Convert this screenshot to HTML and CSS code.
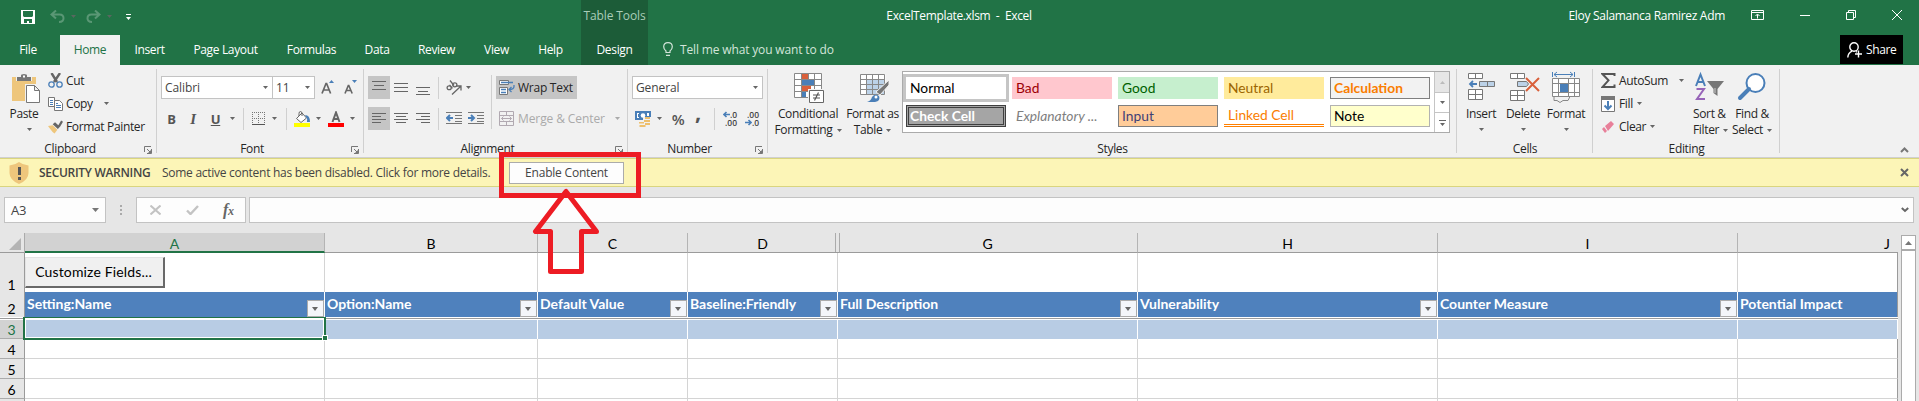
FILE: index.html
```html
<!DOCTYPE html>
<html lang="en">
<head>
<meta charset="utf-8">
<title>ExcelTemplate.xlsm - Excel</title>
<link rel="stylesheet" href="styles.css">
</head>
<body>
<svg class="sprite" width="0" height="0">
  <symbol id="dd" viewBox="0 0 5 3"><path d="M0 0h5L2.500 3z" fill="#666"/></symbol>
  <symbol id="launch" viewBox="0 0 8 8"><path d="M.5 6V.5H7M7.500 3v4.500H3M3 3l3.500 3.500" fill="none" stroke="#777"/><path d="M7 4v3H4z" fill="#777"/></symbol>
</svg>
<div class="app">
  <header class="top">
    <div class="titlebar">
      <div class="qat">
        <svg width="14" height="14" viewBox="0 0 14 14"><path d="M0 0h14v14H0z" fill="#fff"/><path d="M2 1h10v5l-1 1H3L2 6zM3 9h8v4H8v-2H6v2H3z" fill="#217346"/></svg>
        <svg class="undo" width="15" height="13" viewBox="0 0 15 13"><path d="M6 .5L1.500 4.500 6 8.500M2 4.500h7.500q4 0 4 3.700t-4.500 3.800" fill="none" stroke="#5a9775" stroke-width="2"/></svg>
        <svg class="qd" width="5" height="3"><use href="#dd"/></svg>
        <svg class="redo" width="15" height="13" viewBox="0 0 15 13"><path d="M9 .5l4.500 4L9 8.500M13 4.500H5.500q-4 0-4 3.700T6 12" fill="none" stroke="#5a9775" stroke-width="2"/></svg>
        <svg class="qd" width="5" height="3"><use href="#dd"/></svg>
        <svg class="qc" width="5" height="6"><path d="M0 0h5v1H0zM0 3h5L2.500 6z" fill="#fff"/></svg>
      </div>
      <div class="ctx-title">Table Tools</div>
      <div class="doc-title">ExcelTemplate.xlsm&nbsp; -&nbsp; Excel</div>
      <div class="user">Eloy Salamanca Ramirez Adm</div>
      <div class="win">
        <svg width="13" height="10" viewBox="0 0 13 10"><path d="M.5.500h12v9H.5zM.5 2.500h12M6.500 8.500v-4M4.500 6l2-2 2 2" fill="none" stroke="#fff"/></svg>
        <svg width="10" height="10"><path d="M0 5.500h10" stroke="#fff"/></svg>
        <svg width="10" height="10"><path d="M.5 2.500h7v7h-7zM2.500 2.500v-2h7v7h-2" fill="none" stroke="#fff"/></svg>
        <svg width="10" height="10"><path d="M0 0l10 10M10 0L0 10" stroke="#fff"/></svg>
      </div>
    </div>
    <nav class="tabs">
      <a class="tab">File</a><a class="tab on">Home</a><a class="tab">Insert</a><a class="tab">Page Layout</a><a class="tab">Formulas</a><a class="tab">Data</a><a class="tab">Review</a><a class="tab">View</a><a class="tab help">Help</a><a class="tab ctx">Design</a>
      <div class="tell"><svg width="10" height="14" viewBox="0 0 10 14"><path d="M3 10.500V9Q.7 7.200.7 4.700.7.700 5 .7t4.300 4Q9.300 7.200 7 9v1.500zM3 13.300h4" fill="none" stroke="#d3e5da" stroke-width="1.200"/></svg><span>Tell me what you want to do</span></div>
      <div class="share"><svg width="15" height="16" viewBox="0 0 15 16"><circle cx="7" cy="5" r="4.200" fill="none" stroke="#fff" stroke-width="1.400"/><path d="M.8 15.500Q1 11 5 9.200M9 9.500l1 .6M11.500 8.500v7M8 12h7" fill="none" stroke="#fff" stroke-width="1.400"/></svg><span>Share</span></div>
    </nav>
  </header>

  <section class="ribbon">
    <div class="group clipboard">
      <div class="body">
        <div class="big paste">
          <svg width="30" height="31" viewBox="0 0 30 31"><path d="M1 4h24v24H1z" fill="#eec67c"/><path d="M5 2h16v6H5z" fill="#f1f1f1"/><path d="M6 4h4V2.500Q10 1 13 1t3 1.500V4h4v4H6z" fill="#777"/><path d="M12 2.500h2v2h-2z" fill="#fff"/><path d="M14 11h16v20H14z" fill="#f1f1f1"/><path d="M15.500 12.500h8l5 5v12h-13zM23.500 12.500v5h5" fill="#fff" stroke="#777"/></svg>
          <span>Paste</span><svg class="dd" width="5" height="3"><use href="#dd"/></svg>
        </div>
        <div class="list">
          <div><svg width="15" height="15" viewBox="0 0 15 15"><path d="M3.500 0L9 9M12 0L6 9" stroke="#666" stroke-width="2.400"/><circle cx="3.500" cy="11.500" r="2.700" fill="none" stroke="#4a7fb8" stroke-width="1.300"/><circle cx="11.500" cy="11.500" r="2.700" fill="none" stroke="#4a7fb8" stroke-width="1.300"/></svg><span>Cut</span></div>
          <div><svg width="15" height="14" viewBox="0 0 15 14"><path d="M.5.500h6v9h-6z" fill="#fff" stroke="#777"/><path d="M6.500 3.500h5l3 3v7h-8z" fill="#fff" stroke="#777"/><path d="M2 3.500h3M2 5.500h3M2 7.500h3M8 8.500h5M8 10.500h5M8 6.500h2" stroke="#4a7fb8"/></svg><span>Copy</span><svg class="dd" width="5" height="3"><use href="#dd"/></svg></div>
          <div><svg width="15" height="14" viewBox="0 0 16 14"><path d="M0 6l5-1 5 5-3 4q-2-1-4-4z" fill="#eec67c"/><path d="M5 4l2.500-2L11 5l3-5 2 1.500-3 5L10.500 9z" fill="#666"/></svg><span>Format Painter</span></div>
        </div>
      </div>
      <div class="label">Clipboard<svg width="8" height="8"><use href="#launch"/></svg></div>
    </div>

    <div class="group font">
      <div class="body rows">
        <div class="row r1">
          <div class="combo"><span>Calibri</span><svg class="dd" width="5" height="3"><use href="#dd"/></svg></div>
          <div class="combo"><span>11</span><svg class="dd" width="5" height="3"><use href="#dd"/></svg></div>
          <svg width="13" height="14" viewBox="0 0 13 14"><path d="M1 13.500L5 3.500h.6l4 10M2.600 10h5.600" fill="none" stroke="#666" stroke-width="1.700"/><path d="M8 3h5l-2.500-3z" fill="#4a7fb8"/></svg>
          <svg width="13" height="14" viewBox="0 0 13 14"><path d="M1 13.500l3.300-8h.5l3.400 8M2.300 10.500h4.600" fill="none" stroke="#666" stroke-width="1.600"/><path d="M8 0h5l-2.500 3z" fill="#4a7fb8"/></svg>
        </div>
        <div class="row r2">
          <b class="fb">B</b><i class="fi">I</i><u class="fu">U</u><svg class="dd" width="5" height="3"><use href="#dd"/></svg><s></s>
          <svg width="13" height="13" viewBox="0 0 13 13"><path d="M0 .5h13M.5 0v13M12.500 0v13M6.500 0v13M0 6.500h13" fill="none" stroke="#777" stroke-dasharray="1 1"/><path d="M0 12.500h13" stroke="#555"/></svg>
          <svg class="dd" width="5" height="3"><use href="#dd"/></svg><s></s>
          <svg width="16" height="16" viewBox="0 0 16 16"><path d="M2.500 7.500L8 2l4.500 5L7 11.500z" fill="#fff" stroke="#666"/><path d="M5 5V2.500Q5 .5 6.500.500T8 2.500V5" fill="none" stroke="#666"/><path d="M11 4q5 0 5 7h-3q1-3-1-5z" fill="#4a7fb8"/><path d="M0 12h16v4H0z" fill="#ff0"/></svg>
          <svg class="dd" width="5" height="3"><use href="#dd"/></svg>
          <svg width="16" height="16" viewBox="0 0 16 16"><path d="M4.500 11L8 1.500 11.500 11M5.500 8h5" fill="none" stroke="#666" stroke-width="2"/><path d="M0 12h16v4H0z" fill="red"/></svg>
          <svg class="dd" width="5" height="3"><use href="#dd"/></svg>
        </div>
      </div>
      <div class="label">Font<svg width="8" height="8"><use href="#launch"/></svg></div>
    </div>

    <div class="group align">
      <div class="body cols">
        <div class="al">
          <div class="row">
            <div class="sel"><svg width="14" height="15"><path d="M0 1.500h14M2 5.500h10M0 9.500h14" stroke="#666"/></svg></div>
            <svg width="14" height="15"><path d="M0 3.500h14M0 7.500h14M0 11.500h14" stroke="#666"/></svg>
            <svg width="14" height="15"><path d="M0 7.500h14M2 11.500h10M0 14.500h14" stroke="#666"/></svg>
            <s></s>
            <svg width="16" height="15" viewBox="0 0 16 15"><g fill="none" stroke="#666" stroke-width="1.300"><ellipse cx="3.200" cy="7.800" rx="2.100" ry="1.900"/><path d="M3.500 4.800l3 3.500"/><ellipse cx="8.800" cy="4.800" rx="2.100" ry="2"/><path d="M4 .5l4 5M6 14.500l8.500-8M10.500 6h4.500v4.500"/></g></svg>
            <svg class="dd" width="5" height="3"><use href="#dd"/></svg>
          </div>
          <div class="row">
            <div class="sel"><svg width="14" height="15"><path d="M0 2.500h14M0 5.500h9M0 8.500h14M0 11.500h9" stroke="#666"/></svg></div>
            <svg width="14" height="15"><path d="M0 2.500h14M2 5.500h10M0 8.500h14M2 11.500h10" stroke="#666"/></svg>
            <svg width="14" height="15"><path d="M0 2.500h14M5 5.500h9M0 8.500h14M5 11.500h9" stroke="#666"/></svg>
            <s></s>
            <svg width="16" height="15"><path d="M0 1.500h16M9 4.500h7M9 7.500h7M9 10.500h7M0 12.500h16" stroke="#777"/><path d="M1 7h6M4 4L1 7l3 3" stroke="#4a7fb8" stroke-width="2" fill="none"/></svg>
            <svg width="16" height="15"><path d="M0 1.500h16M9 4.500h7M9 7.500h7M9 10.500h7M0 12.500h16" stroke="#777"/><path d="M0 7h6M3 4l3 3-3 3" stroke="#4a7fb8" stroke-width="2" fill="none"/></svg>
          </div>
        </div>
        <s class="tall"></s>
        <div class="wr">
          <div class="wrap sel"><svg width="16" height="16" viewBox="0 0 16 16"><path d="M.5.500h9v4h-9zM.5 7.500h8v7h-8z" fill="#fff" stroke="#777"/><path d="M2 2.500h12M2 9.500h5M2 12.500h5M15 5v1.500Q15 9.500 10 9.500M12.500 7L10 9.500l2.500 2.500" fill="none" stroke="#4a7fb8" stroke-width="1.300"/></svg><span>Wrap Text</span></div>
          <div class="wrap off"><svg width="15" height="15" viewBox="0 0 15 15"><path d="M.5.500h14v14H.5zM.5 4.500h14M.5 10.500h14M7.500.500v4M7.500 10.500v4M2.500 7.500h10M4.500 5.500l-2 2 2 2M10.500 5.500l2 2-2 2" fill="none" stroke="#b1a9b1"/></svg><span>Merge &amp; Center</span><svg class="dd" width="5" height="3"><use href="#dd"/></svg></div>
        </div>
      </div>
      <div class="label">Alignment<svg width="8" height="8"><use href="#launch"/></svg></div>
    </div>

    <div class="group number">
      <div class="body rows">
        <div class="row"><div class="combo"><span>General</span><svg class="dd" width="5" height="3"><use href="#dd"/></svg></div></div>
        <div class="row r2">
          <svg width="16" height="16" viewBox="0 0 16 16"><path d="M0 0h16v9H0z" fill="#4a7fb8"/><path d="M2 2h2v1H3v3h1v1H2zM12 2h2v3h-2z" fill="#fff"/><circle cx="8" cy="4.500" r="2.300" fill="#fff"/><path d="M8 6h8v8h-4v2H3v-5h5z" fill="#f1f1f1"/><path d="M10 6h5v2h-5zM9 9h6v2H9zM10 12h5v2h-5zM4 11h5v1.500H4zM4.500 14h6v2h-6z" fill="#eebf6d"/></svg>
          <svg class="dd" width="5" height="3"><use href="#dd"/></svg>
          <b class="pct">%</b><b class="comma">,</b><s></s>
          <div class="dec"><span><svg width="7" height="7"><path d="M1 3.500h6M3.500 1L1 3.500 3.500 6" fill="none" stroke="#4a7fb8" stroke-width="1.600"/></svg>.0</span><span>.00</span></div>
          <div class="dec"><span>.00</span><span><svg width="7" height="7"><path d="M0 3.500h6M3.500 1L6 3.500 3.500 6" fill="none" stroke="#4a7fb8" stroke-width="1.600"/></svg>.0</span></div>
        </div>
      </div>
      <div class="label">Number<svg width="8" height="8"><use href="#launch"/></svg></div>
    </div>

    <div class="group styles">
      <div class="body">
        <div class="big cf">
          <svg width="30" height="31" viewBox="0 0 30 31"><path d="M.5.500h27v24H.5z" fill="#fff"/><path d="M8 1h6v5H8zM8 13h9v5H8z" fill="#d9603b"/><path d="M8 7h12v5H8zM8 19h4v6H8z" fill="#4a7fb8"/><path d="M.5.500h27v24H.5zM.5 6.500h27M.5 12.500h27M.5 18.500h27M7.500.500v24M14.500.500v6M20.500.500v24" fill="none" stroke="#888"/><path d="M14 16h16v15H14z" fill="#f1f1f1"/><path d="M15.500 17.500h14v12h-14z" fill="#fff" stroke="#666"/><path d="M19 22h7M19 25h7M24.500 19.500l-4 8" stroke="#555" stroke-width="1.200"/></svg>
          <span>Conditional</span><span>Formatting <svg class="dd" width="5" height="3"><use href="#dd"/></svg></span>
        </div>
        <div class="big ft">
          <svg width="30" height="29" viewBox="0 0 30 29"><path d="M.5.500h25v20H.5z" fill="#fff"/><path d="M7 6h18v14H7z" fill="#bcd2e8"/><path d="M.5.500h24v20H.5zM.5 5.500h24M.5 10.500h24M.5 15.500h24M6.500.500v20M12.500.500v20M18.500.500v20" fill="none" stroke="#888"/><path d="M29 6v5L20 21l-4-3z" fill="#777" stroke="#f1f1f1"/><path d="M7 28q4-1 5-5 3-4 7-1 2 5-4 6z" fill="#4a7fb8"/><circle cx="16" cy="23" r="1.500" fill="#fff"/></svg>
          <span>Format as</span><span>Table <svg class="dd" width="5" height="3"><use href="#dd"/></svg></span>
        </div>
        <div class="gallery">
          <div class="swatches">
            <div class="sw normal">Normal</div><div class="sw bad">Bad</div><div class="sw good">Good</div><div class="sw neutral">Neutral</div><div class="sw calc">Calculation</div>
            <div class="sw check">Check Cell</div><div class="sw expl">Explanatory ...</div><div class="sw input">Input</div><div class="sw linked">Linked Cell</div><div class="sw note">Note</div>
          </div>
          <div class="gs">
            <div class="dim"><svg width="5" height="3"><path d="M0 3h5L2.500 0z" fill="#bbb"/></svg></div>
            <div><svg width="5" height="3"><use href="#dd"/></svg></div>
            <div><svg width="7" height="6"><path d="M0 0h7v1H0zM1 3h5L3.500 6z" fill="#666"/></svg></div>
          </div>
        </div>
      </div>
      <div class="label plain">Styles</div>
    </div>

    <div class="group cells">
      <div class="body">
        <div class="big b1">
          <svg width="27" height="31" viewBox="0 0 27 31"><path d="M.5.500h14v5H.5zM7.500.500v5M.5 16.500h14v10H.5zM7.500 16.500v10M.5 21.500h14" fill="#fff" stroke="#777"/><path d="M11.500 8.500h15v5h-15zM19.500 8.500v5" fill="#bcd2e8" stroke="#777"/><path d="M2 11h7M5 8l-3 3 3 3" fill="none" stroke="#4a7fb8" stroke-width="1.800"/></svg>
          <span>Insert</span><svg class="dd" width="5" height="3"><use href="#dd"/></svg>
        </div>
        <div class="big b2">
          <svg width="30" height="31" viewBox="0 0 30 31"><path d="M.5.500h14v5H.5zM7.500.500v5M.5 17.500h14v10H.5zM7.500 17.500v10M.5 22.500h14" fill="#fff" stroke="#777"/><path d="M7.500 8.500h9l2 2.500-2 2.500h-9z" fill="#bcd2e8" stroke="#777"/><path d="M16 5l13 13M29 5L16 18" stroke="#d9603b" stroke-width="2"/></svg>
          <span>Delete</span><svg class="dd" width="5" height="3"><use href="#dd"/></svg>
        </div>
        <div class="big b3">
          <svg width="28" height="31" viewBox="0 0 28 31"><path d="M.5 6.500h27v18h-27z" fill="#fff"/><path d="M.5 6.500h27v18h-27zM.5 11.500h27M.5 20.500h27M6.500 6.500v18M16.500 6.500v18M22.500 6.500v18M2 24.500v4h3l3 2 3-2h5l2-4" fill="none" stroke="#888"/><path d="M8 12h8v8H8z" fill="#4a7fb8"/><path d="M.5 0v5M22.500 0v5M2 2.500h19M5 0L2 2.500 5 5M18 0l3 2.500L18 5" fill="none" stroke="#4a7fb8"/></svg>
          <span>Format</span><svg class="dd" width="5" height="3"><use href="#dd"/></svg>
        </div>
      </div>
      <div class="label plain">Cells</div>
    </div>

    <div class="group editing">
      <div class="body">
        <div class="list">
          <div class="as"><svg width="15" height="15" viewBox="0 0 15 15"><path d="M13.500 3V1H1.500l6 6.300-6 6.700h12v-2.500" fill="none" stroke="#555" stroke-width="2"/></svg><span>AutoSum</span><svg class="dd" width="5" height="3"><use href="#dd"/></svg></div>
          <div><svg width="15" height="16" viewBox="0 0 15 16"><path d="M.5.500h13v15H.5z" fill="#fff" stroke="#777"/><path d="M0 0h14v4H0z" fill="#777"/><path d="M7 5v8M3.500 9.500L7 13l3.500-3.500" fill="none" stroke="#4a7fb8" stroke-width="2"/></svg><span>Fill</span><svg class="dd" width="5" height="3"><use href="#dd"/></svg></div>
          <div><svg width="15" height="14" viewBox="0 0 15 14"><path d="M4 6l6-5 3 3-6 7zM1 9l2-2 3 4-2 2z" fill="#e8809a"/></svg><span>Clear</span><svg class="dd" width="5" height="3"><use href="#dd"/></svg></div>
        </div>
        <div class="big sf">
          <svg width="30" height="31" viewBox="0 0 30 31"><path d="M1 13L5.500 1.500 10 13M2.500 9h6" fill="none" stroke="#4a7fb8" stroke-width="2"/><path d="M1.500 16H9L2 26h8" fill="none" stroke="#9764b8" stroke-width="2"/><path d="M12 8h17l-6.500 8v7l-4-3v-4z" fill="#777"/><path d="M20 15v5" stroke="#ccc"/></svg>
          <span>Sort &amp;</span><span>Filter <svg class="dd" width="5" height="3"><use href="#dd"/></svg></span>
        </div>
        <div class="big fs">
          <svg width="28" height="31" viewBox="0 0 28 31"><circle cx="17.500" cy="10" r="9" fill="#fff" stroke="#4a7fb8" stroke-width="2"/><path d="M11 16L2 25" stroke="#4a7fb8" stroke-width="4" stroke-linecap="round"/></svg>
          <span>Find &amp;</span><span>Select <svg class="dd" width="5" height="3"><use href="#dd"/></svg></span>
        </div>
      </div>
      <div class="label plain">Editing</div>
    </div>
    <div class="collapse"><svg width="9" height="6"><path d="M1 5l3.500-3.500L8 5" fill="none" stroke="#777" stroke-width="2"/></svg></div>
  </section>

  <section class="warning">
    <svg class="shield" width="20" height="22" viewBox="0 0 20 22"><path d="M10 0q4 3 9.500 3.500V11q0 7-9.500 11Q.5 18 .5 11V3.500Q6 3 10 0z" fill="#eec67c"/><path d="M9 5h3v8H9zM9 15h3v3H9z" fill="#555"/></svg>
    <b>SECURITY WARNING</b>
    <span class="msg">Some active content has been disabled. Click for more details.</span>
    <button class="enable">Enable Content</button>
    <svg class="x" width="9" height="9"><path d="M1 1l7 7M8 1L1 8" stroke="#666" stroke-width="2"/></svg>
  </section>

  <section class="formula">
    <div class="namebox"><span>A3</span><svg width="7" height="4"><path d="M0 0h7L3.500 4z" fill="#777"/></svg></div>
    <svg class="dots" width="2" height="10"><path d="M0 0h2v2H0zM0 4h2v2H0zM0 8h2v2H0z" fill="#aaa"/></svg>
    <div class="fx"><svg width="11" height="10"><path d="M.5.500l10 9M10.500.500l-10 9" stroke="#c3c3c3" stroke-width="2"/></svg><svg width="13" height="10"><path d="M1 5.500L4.500 9 12 1" fill="none" stroke="#c3c3c3" stroke-width="2.400"/></svg><i>f<small>x</small></i></div>
    <div class="input-line"><svg width="8" height="6"><path d="M.8 1L4 4 7.200 1" fill="none" stroke="#666" stroke-width="2"/></svg></div>
  </section>

  <main class="sheet">
    <div class="grid">
      <div class="gr head"><div class="corner"><svg width="12" height="12"><path d="M12 0v12H0z" fill="#b4b4b4"/></svg></div><div class="on">A</div><div>B</div><div>C</div><div class="hid">D</div><div>G</div><div>H</div><div>I</div><div class="last">J</div></div>
      <div class="gr one"><div class="rh">1</div><div class="btn-cell"><button class="customize">Customize Fields...</button></div><div></div><div></div><div></div><div></div><div></div><div></div><div></div></div>
      <div class="gr fields"><div class="rh">2</div><div>Setting:Name<em></em></div><div>Option:Name<em></em></div><div>Default Value<em></em></div><div>Baseline:Friendly<em></em></div><div>Full Description<em></em></div><div>Vulnerability<em></em></div><div>Counter Measure<em></em></div><div>Potential Impact</div></div>
      <div class="freeze"></div>
      <div class="gr band"><div class="rh on">3</div><div></div><div></div><div></div><div></div><div></div><div></div><div></div><div></div></div>
      <div class="gr"><div class="rh">4</div><div></div><div></div><div></div><div></div><div></div><div></div><div></div><div></div></div>
      <div class="gr"><div class="rh">5</div><div></div><div></div><div></div><div></div><div></div><div></div><div></div><div></div></div>
      <div class="gr"><div class="rh">6</div><div></div><div></div><div></div><div></div><div></div><div></div><div></div><div></div></div>
      <div class="gr"><div class="rh"></div><div></div><div></div><div></div><div></div><div></div><div></div><div></div><div></div></div>
      <div class="selection"></div><div class="handle"></div>
    </div>
    <div class="vscroll"><div class="up"><svg width="7" height="4"><path d="M0 4h7L3.500 0z" fill="#777"/></svg></div><div class="thumb"></div></div>
  </main>

  <svg class="callout" width="150" height="130"><path d="M10.500 4.500h137v41h-137z" fill="none" stroke="#ed1c24" stroke-width="5"/><path d="M75 41.500l-30.500 40H59.500v40h31v-40h15z" fill="none" stroke="#ed1c24" stroke-width="5" stroke-linejoin="round"/></svg>
</div>
</body>
</html>
```

FILE: styles.css
```css
* { box-sizing: border-box; }
body { margin: 0; font: 12px/16px "Open Sans", "Noto Sans", sans-serif; color: #262626; letter-spacing: -0.35px; }
svg { display: block; flex: none; }
.sprite { position: absolute; }
.app { position: relative; width: 1919px; height: 401px; overflow: hidden; background: #e6e6e6; white-space: nowrap; }

/* title bar and tabs */
.top { height: 65px; background: #217346; color: #fff; }
.titlebar { height: 35px; display: grid; grid-template-columns: 581px 67px 622px 459px 190px; }
.qat { display: flex; align-items: flex-start; padding: 10px 0 0 21px; }
.undo { margin-left: 15px; }
.redo { margin-left: 10px; }
.qd { margin: 5px 0 0 6px; opacity: .8; }
.qc { margin: 4px 0 0 14px; }
.ctx-title { background: #1c5c38; color: #a9cdb8; text-align: center; line-height: 32px; letter-spacing: -0.1px; }
.doc-title { text-align: center; line-height: 32px; }
.user { text-align: right; line-height: 32px; padding-right: 4px; letter-spacing: -0.3px; }
.win { display: grid; grid-template-columns: 13px 10px 10px 10px; column-gap: 36px; padding: 10px 0 0 22px; }
.tabs { height: 30px; display: grid; grid-template-columns: 60px 60px 59px 93px 79px 52px 67px 53px 58px 67px 1fr 63px; padding-right: 16px; }
.tab { text-align: center; line-height: 30px; }
.tab:first-child { padding-right: 4px; }
.tab.help { padding-right: 3px; }
.tab.on { background: #f1f1f1; color: #217346; }
.tab.ctx { background: #1c5c38; }
.tell { display: flex; align-items: center; gap: 7px; padding-left: 15px; color: #d3e5da; letter-spacing: -0.15px; }
.tell svg { margin-top: -3px; }
.share { height: 29px; background: #000; display: flex; align-items: center; gap: 4px; padding-left: 7px; }

/* ribbon */
.ribbon { height: 93px; background: #f1f1f1; border-bottom: 1px solid #d0d0d0; display: flex; }
.group { position: relative; display: flex; flex-direction: column; flex: none; }
.group::after { content: ""; position: absolute; right: 0; top: 4px; height: 84px; width: 1px; background: #d0d0d0; }
.clipboard { width: 157px; }
.font { width: 207px; }
.align { width: 264px; }
.number { width: 140px; }
.styles { width: 689px; }
.cells { width: 136px; }
.editing { width: 187px; }
.body { height: 75px; display: flex; }
.label { height: 17px; line-height: 18px; display: flex; justify-content: center; padding-right: 17px; position: relative; }
.label svg { position: absolute; right: 5px; top: 6px; }
.label.plain { padding-right: 0; }
.big { display: flex; flex-direction: column; align-items: center; padding-top: 8px; }
.big > svg:first-child { height: 31px; margin-bottom: 2px; overflow: visible; }
.big .dd { margin-top: 6px; }
.big span { line-height: 16px; display: flex; align-items: center; gap: 4px; }
.big span .dd { margin-top: 0; }
.paste { margin-left: 7px; width: 34px; }
.paste > svg:first-child { align-self: flex-end; }
.list > div { display: flex; align-items: center; height: 23px; }
.list { padding-top: 4px; }
.clipboard .list { margin-left: 7px; }
.list > div > svg:first-child { margin-right: 3px; }
.list span + .dd { margin-left: 4px; }
.clipboard span + .dd, .as span + .dd { margin-left: 11px; }
.rows { display: block; padding-top: 11px; }
.row { display: flex; align-items: center; height: 23px; margin-bottom: 8px; }
.combo { height: 23px; border: 1px solid #c3c3c3; background: #fff; display: flex; align-items: center; justify-content: space-between; padding: 0 4px 0 3px; color: #444; letter-spacing: -0.1px; }
.row s, .tall { width: 1px; height: 22px; background: #d0d0d0; flex: none; }
.font .rows { padding-left: 4px; }
.font .combo:first-child { width: 112px; }
.font .combo + .combo { width: 43px; margin-left: -1px; }
.r1 > svg { margin-left: 6px; margin-top: -2px; }
.r1 > svg + svg { margin-left: 10px; }
.font .r2 { display: grid; grid-template-columns: 21px 22px 23px 11px 10px 20px 13px 10px 21px 12px 24px 9px; justify-items: center; align-items: center; }
.fb, .fi, .fu { font-size: 13px; line-height: 20px; color: #555; font-weight: 700; }
.fi { font-family: "Liberation Serif", serif; font-size: 15px; }
.align .cols { padding: 11px 0 0 4px; }
.al { width: 123px; }
.al .row { display: grid; grid-template-columns: 22px 22px 22px 8px 24px 20px; justify-items: center; }
.al .row:first-child { grid-template-columns: 22px 22px 22px 8px 24px 4px; }
.sel { background: #c5c5c5; }
.al .sel { width: 22px; height: 23px; display: grid; place-items: center; }
.tall { height: 54px; margin-top: -1px; }
.wr { padding-left: 4px; }
.wrap { width: 81px; height: 23px; display: flex; align-items: center; gap: 3px; padding-left: 3px; margin-bottom: 8px; letter-spacing: -0.25px; }
.off { color: #aaa; width: 125px; letter-spacing: -0.1px; gap: 4px; }
.off .dd { margin-left: 6px; opacity: .5; }
.number .rows { padding-left: 4px; }
.number .combo { width: 131px; }
.number .r2 { display: grid; grid-template-columns: 22px 10px 28px 12px 15px 22px 22px; justify-items: center; }
.number .r2 s { justify-self: end; margin-right: 4px; }
.pct { font-size: 15px; color: #555; font-weight: 600; }
.comma { font-size: 22px; color: #555; margin-top: -16px; }
.dec { font-size: 8.500px; line-height: 8px; color: #444; font-weight: 600; letter-spacing: 0; display: flex; flex-direction: column; align-items: flex-end; }
.dec span { display: flex; }

/* styles gallery */
.cf { margin-left: 5px; width: 70px; }
.cf > svg:first-child { margin-left: 2px; }
.ft { margin-left: 2px; width: 55px; }
.ft > svg:first-child { margin-left: 4px; }
.gallery { margin: 6px 0 0 2px; width: 548px; height: 62px; display: flex; border: 1px solid #ababab; background: #fff; }
.swatches { width: 531px; display: grid; grid-template-columns: repeat(5, 100px); grid-auto-rows: 22px; gap: 6px; padding: 5px 0 0 3px; font: 13.800px/21px Lato, sans-serif; letter-spacing: 0; }
.sw { padding-left: 4px; height: 22px; }
.normal { color: #000; outline: 3px solid #c5c5c5; }
.bad { background: #ffc7ce; color: #9c0006; }
.good { background: #c6efce; color: #006100; }
.neutral { background: #ffeb9c; color: #9c6500; }
.calc { background: #f2f2f2; color: #fa7d00; font-weight: 700; border: 1px solid #7f7f7f; padding-left: 3px; line-height: 19px; }
.check { background: #a5a5a5; color: #fff; font-weight: 700; border: 3px double #3f3f3f; padding-left: 1px; line-height: 15px; }
.expl { color: #7f7f7f; font-style: italic; }
.input { background: #ffcc99; color: #3f3f76; border: 1px solid #7f7f7f; padding-left: 3px; line-height: 19px; }
.linked { color: #fa7d00; border-bottom: 3px double #ff8001; line-height: 20px; }
.note { background: #ffffcc; color: #000; border: 1px solid #b2b2b2; padding-left: 3px; line-height: 19px; }
.gs { flex: 1; border-left: 1px solid #c5c5c5; }
.gs div { height: 20px; display: grid; place-items: center; border-top: 1px solid #c5c5c5; }
.gs .dim { background: #e6e6e6; border-top: 0; }
.b1 { margin-left: 9px; width: 30px; }
.b2 { margin-left: 10px; width: 34px; }
.b2 > svg:first-child { margin-left: 3px; }
.b3 { margin-left: 6px; width: 40px; }
.b3 > svg:first-child { margin-top: -1px; margin-bottom: 3px; }
.editing .list { margin-left: 8px; width: 92px; }
.sf { width: 34px; align-items: flex-start; }
.sf > svg:first-child { margin-left: 2px; }
.fs { width: 38px; margin-left: 6px; }
.collapse { margin: 82px 0 0 120px; }

/* message bar */
.warning { height: 29px; background: #fcf5b7; border: solid #d9d57f; border-width: 1px 0; display: grid; grid-template-columns: 39px 123px 347px 115px 1fr 19px; align-items: center; color: #444; }
.shield { margin-left: 9px; margin-top: 1px; }
.warning b { font-weight: 600; letter-spacing: -0.3px; }
.enable { height: 22px; border: 1px solid #ababab; background: #fdfdfd; font: inherit; letter-spacing: -0.2px; color: #444; padding: 0; }
.msg { letter-spacing: -0.27px; }
.warning .x { grid-column: 6; }

/* formula bar */
.formula { height: 46px; display: flex; align-items: flex-start; padding: 10px 5px 0 4px; }
.namebox, .fx, .input-line { height: 26px; border: 1px solid #c3c3c3; background: #fdfdfd; display: flex; align-items: center; }
.namebox { width: 102px; justify-content: space-between; padding: 0 6px; font-size: 13px; letter-spacing: -0.1px; color: #444; }
.dots { margin: 8px 14px 0 14px; }
.fx { width: 110px; padding-left: 13px; gap: 25px; }
.fx i { font: italic 700 16px/20px "Liberation Serif", serif; color: #666; margin-left: -1px; }
.fx small { font-size: 12px; }
.input-line { margin-left: 3px; flex: 1; justify-content: flex-end; padding-right: 4px; }

/* worksheet */
.sheet { display: flex; height: 168px; }
.grid { position: relative; width: 1898px; overflow: hidden; font: 14px/20px Lato, sans-serif; letter-spacing: 0; color: #000; }
.gr { display: grid; grid-template-columns: 25px 300px 213px 150px 150px 300px 300px 300px 160px; height: 20px; }
.gr > div { border-right: 1px solid #d4d4d4; border-bottom: 1px solid #d4d4d4; background: #fff; overflow: hidden; }
.gr > div:last-child { border-right-color: #9b9b9b; }
.gr > .rh { background: #e6e6e6; border-right: 1px solid #9b9b9b; border-bottom-color: #ababab; display: flex; align-items: flex-end; justify-content: center; padding-right: 1px; line-height: 17px; }
.gr > .rh.on { background: #d2d2d2; color: #217346; }
.head > div { background: #e6e6e6; border-bottom-color: #9b9b9b; text-align: center; border-right-color: #b4b4b4; line-height: 22px; }
.head > .on { background: #d2d2d2; color: #217346; border-bottom: 2px solid #217346; }
.head > .hid { width: 152px; border-right: 1px solid #ababab; box-shadow: inset -3px 0 #e6e6e6, inset -4px 0 #ababab; padding-right: 2px; position: relative; }
.head > .last { text-align: left; border-right: 0; padding-left: 146px; }
.head > .corner { border-right-color: #ababab; padding: 5px 0 0 9px; }
.gr.one { height: 39px; }
.one > div { border-bottom: 0; }
.gr.one > .rh { height: 40px; }
.btn-cell { padding-top: 4px; }
.customize { display: block; width: 140px; height: 31px; border: solid; border-width: 1px 2px 2px 1px; border-color: #e3e3e3 #696969 #696969 #e3e3e3; background: #f0f0f0; font: 14px/20px Lato, sans-serif; letter-spacing: 0.15px; padding: 0 2px 0 0; color: #000; }
.gr.fields { height: 25px; }
.fields > div:not(.rh) { background: #4f81bd; color: #fff; border-right-color: #fff; border-bottom: 0; font-weight: 700; padding-left: 2px; position: relative; line-height: 23px; }
.fields > div:last-child { border-right-color: #9b9b9b !important; }
.gr.fields > .rh { border-bottom: 0; }
.fields em { position: absolute; right: 0; bottom: 0; width: 17px; height: 17px; background: #f4f6fa; border: 1px solid #ababab; }
.fields em::after { content: ""; position: absolute; left: 4px; top: 6px; border: solid transparent; border-width: 4px 3.500px 0; border-top-color: #666; }
.freeze { height: 3px; background: #9b9b9b; border: solid #fff; border-width: 1px 0; }
.gr.band { height: 19px; }
.band > div:not(.rh) { background: #b8cce4; border-bottom: 0; border-right-color: #fff; }
.selection { position: absolute; left: 23px; top: 84px; width: 303px; height: 23px; border: 2px solid #217346; border-top-width: 1px; box-shadow: inset 0 0 0 1px #fff; }
.handle { position: absolute; left: 322px; top: 102px; width: 6px; height: 6px; background: #217346; outline: 1px solid #fff; outline-offset: -1px; }
.vscroll { margin: 2px 0 0 3px; width: 15px; }
.up { height: 15px; border: 1px solid #ababab; background: #fff; display: grid; place-items: center; }
.thumb { height: 160px; border: 1px solid #ababab; background: #fff; }

/* red marker round the Enable Content button */
.callout { position: absolute; left: 491px; top: 150px; }
```
